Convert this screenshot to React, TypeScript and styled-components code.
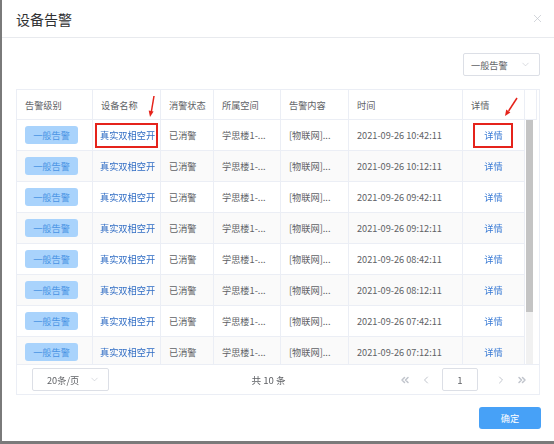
import React from "react";
import styled, { createGlobalStyle } from "styled-components";
import { ChevronDown, ChevronLeft, ChevronRight, ChevronsLeft, ChevronsRight, X } from "lucide-react";

const GlobalStyle = createGlobalStyle`
  html, body {
    margin: 0;
    padding: 0;
    background: #7a7a7a;
  }
  body {
    font-family: "Noto Sans CJK SC", "Noto Sans", sans-serif;
    color: #606266;
  }
  * {
    box-sizing: border-box;
  }
`;

const Page = styled.div`
  width: 554px;
  height: 444px;
  padding: 0 0 3px 2px;
  display: flex;
`;

const Dialog = styled.div`
  position: relative;
  flex: 1;
  background: #fff;
  display: flex;
  flex-direction: column;
`;

const Header = styled.div`
  height: 38px;
  padding: 0 10px 0 14px;
  border-bottom: 1px solid #e8eaee;
  display: flex;
  align-items: center;
  justify-content: space-between;
`;

const Title = styled.div`
  font-size: 14px;
  color: #303133;
`;

const Close = styled.div`
  display: flex;
  color: #c0c4cc;
`;

const Body = styled.div`
  flex: 1;
  padding: 15px 14px 12px 14px;
  display: flex;
  flex-direction: column;
`;

const Toolbar = styled.div`
  display: flex;
  justify-content: flex-end;
  margin-bottom: 13px;
`;

const Select = styled.div<{ $width: number }>`
  width: ${(p) => p.$width}px;
  height: 23px;
  border: 1px solid #dcdfe6;
  border-radius: 2px;
  display: flex;
  align-items: center;
  justify-content: space-between;
  padding: 0 8px 0 7px;
  font-size: 9.2px;
  color: #606266;
  background: #fff;
`;

const SelectText = styled.span<{ $indent?: number }>`
  padding-left: ${(p) => p.$indent || 0}px;
  white-space: nowrap;
`;

const TableWrap = styled.div`
  border: 1px solid #ebeef5;
  display: flex;
  flex-direction: column;
`;

const Table = styled.table`
  table-layout: fixed;
  border-collapse: separate;
  border-spacing: 0;
  font-size: 9.2px;
`;

const Th = styled.th`
  height: 30px;
  padding: 0 8px;
  text-align: left;
  font-weight: normal;
  color: #606266;
  border-right: 1px solid #ebeef5;
  border-bottom: 1px solid #ebeef5;
  white-space: nowrap;
`;

const BodyArea = styled.div`
  display: flex;
  height: 244px;
`;

const Scroll = styled.div`
  width: 508px;
  overflow-y: auto;
  scrollbar-width: none;

  &::-webkit-scrollbar {
    display: none;
  }
`;

const ScrollTrack = styled.div`
  width: 12px;
  padding-left: 1px;
  padding-right: 4px;
  display: flex;
`;

const Rail = styled.div`
  flex: 1;
  background: #f1f1f1;
`;

const Thumb = styled.div`
  background: #c4c4c4;
`;

const Tr = styled.tr<{ $striped: boolean }>`
  background: ${(p) => (p.$striped ? "#fafafa" : "#fff")};
`;

const Td = styled.td<{ $center?: boolean }>`
  height: 31px;
  padding: 0 8px;
  text-align: ${(p) => (p.$center ? "center" : "left")};
  color: #606266;
  border-right: 1px solid #ebeef5;
  border-bottom: 1px solid #ebeef5;
  white-space: nowrap;
`;

const LevelTag = styled.span`
  display: inline-block;
  width: 53px;
  height: 18px;
  line-height: 18px;
  text-align: center;
  border-radius: 3px;
  background: #a9d3fc;
  color: #4a94e4;
`;

const Marked = styled.span<{ $marked: boolean; $l: number; $r: number }>`
  position: relative;
  display: inline-block;
  line-height: 13px;

  &::after {
    content: "";
    display: ${(p) => (p.$marked ? "block" : "none")};
    position: absolute;
    left: -${(p) => p.$l}px;
    right: -${(p) => p.$r}px;
    top: -6px;
    bottom: -6px;
    border: 2px solid #e5231b;
  }
`;

const NameLink = styled(Marked)`
  color: #2f6cc4;
  margin-left: -1px;
`;

const DetailLink = styled(Marked)`
  color: #3a7bd5;
`;

const Footer = styled.div`
  height: 30px;
  border-top: 1px solid #ebeef5;
  display: flex;
  align-items: center;
  padding: 0 11px 0 15px;
`;

const Total = styled.div`
  flex: 1;
  text-align: center;
  padding-left: 30px;
  font-size: 9.6px;
  color: #606266;
  white-space: nowrap;
`;

const Pager = styled.div`
  display: flex;
  align-items: center;
  gap: 8px;
  color: #c0c4cc;
`;

const PagerBtn = styled.span`
  display: flex;
  width: 13px;
  justify-content: center;
`;

const PageInput = styled.div`
  width: 36px;
  height: 23px;
  border: 1px solid #dcdfe6;
  border-radius: 2px;
  display: flex;
  align-items: center;
  justify-content: center;
  font-size: 9.6px;
  color: #606266;
  margin: 0 8px 0 2px;
`;

const Actions = styled.div`
  display: flex;
  justify-content: flex-end;
  margin-top: auto;
`;

const ConfirmButton = styled.button`
  width: 62px;
  height: 22px;
  border: none;
  border-radius: 3px;
  background: #47a1f7;
  color: #fff;
  font-family: inherit;
  font-size: 9.2px;
  margin-right: -1px;
`;

const Annotations = styled.svg`
  position: absolute;
  left: 0;
  top: 0;
  pointer-events: none;
`;

const widths = [76, 68, 53, 67, 68, 114, 62];
const headers = ["告警级别", "设备名称", "消警状态", "所属空间", "告警内容", "时间", "详情"];
const times = [
  "10:42:11", "10:12:11", "09:42:11", "09:12:11", "08:42:11",
  "08:12:11", "07:42:11", "07:12:11", "06:42:11", "06:12:11",
];

const viewHeight = 244;
const contentHeight = times.length * 31;

const Cols: React.FC<{ gutter?: boolean }> = ({ gutter }) => (
  <colgroup>
    {widths.map((w, i) => (
      <col key={i} style={{ width: w }} />
    ))}
    {gutter && <col style={{ width: 12 }} />}
  </colgroup>
);

const App: React.FC = () => {
  return (
    <Page>
      <GlobalStyle />
      <Dialog>
        <Header>
          <Title>设备告警</Title>
          <Close>
            <X size={13} strokeWidth={1.3} />
          </Close>
        </Header>
        <Body>
          <Toolbar>
            <Select $width={77}>
              <SelectText>一般告警</SelectText>
              <ChevronDown size={11} strokeWidth={1.3} color="#c0c4cc" />
            </Select>
          </Toolbar>
          <TableWrap>
            <Table style={{ width: 520 }}>
              <Cols gutter />
              <thead>
                <tr>
                  {headers.map((h) => (
                    <Th key={h}>{h}</Th>
                  ))}
                  <Th />
                </tr>
              </thead>
            </Table>
            <BodyArea>
              <Scroll>
                <Table style={{ width: 508 }}>
                  <Cols />
                  <tbody>
                    {times.map((t, i) => (
                      <Tr key={t} $striped={i % 2 === 1}>
                        <Td>
                          <LevelTag>一般告警</LevelTag>
                        </Td>
                        <Td>
                          <NameLink $marked={i === 0} $l={5} $r={3}>
                            真实双相空开
                          </NameLink>
                        </Td>
                        <Td>已消警</Td>
                        <Td>学思楼1-...</Td>
                        <Td>[物联网]...</Td>
                        <Td>2021-09-26 {t}</Td>
                        <Td $center>
                          <DetailLink $marked={i === 0} $l={11} $r={10}>
                            详情
                          </DetailLink>
                        </Td>
                      </Tr>
                    ))}
                  </tbody>
                </Table>
              </Scroll>
              <ScrollTrack>
                <Rail>
                  <Thumb style={{ height: (viewHeight * viewHeight) / contentHeight }} />
                </Rail>
              </ScrollTrack>
            </BodyArea>
            <Footer>
              <Select $width={77}>
                <SelectText $indent={7}>20条/页</SelectText>
                <ChevronDown size={11} strokeWidth={1.3} color="#c0c4cc" />
              </Select>
              <Total>共 10 条</Total>
              <Pager>
                <PagerBtn>
                  <ChevronsLeft size={12} strokeWidth={3} />
                </PagerBtn>
                <PagerBtn>
                  <ChevronLeft size={12} strokeWidth={2} />
                </PagerBtn>
                <PageInput>1</PageInput>
                <PagerBtn>
                  <ChevronRight size={12} strokeWidth={2} />
                </PagerBtn>
                <PagerBtn>
                  <ChevronsRight size={12} strokeWidth={3} />
                </PagerBtn>
              </Pager>
            </Footer>
          </TableWrap>
          <Actions>
            <ConfirmButton>确定</ConfirmButton>
          </Actions>
        </Body>
        <Annotations width="552" height="441">
          <line x1="152" y1="96" x2="149.3" y2="112" stroke="#e5231b" strokeWidth="1.5" />
          <polygon points="148,117 151.6,111.4 146.7,110.6" fill="#e5231b" />
          <line x1="515" y1="98" x2="506.6" y2="111" stroke="#e5231b" strokeWidth="1.5" />
          <polygon points="503,116 508.4,112.4 504.2,109.6" fill="#e5231b" />
        </Annotations>
      </Dialog>
    </Page>
  );
};

export default App;
